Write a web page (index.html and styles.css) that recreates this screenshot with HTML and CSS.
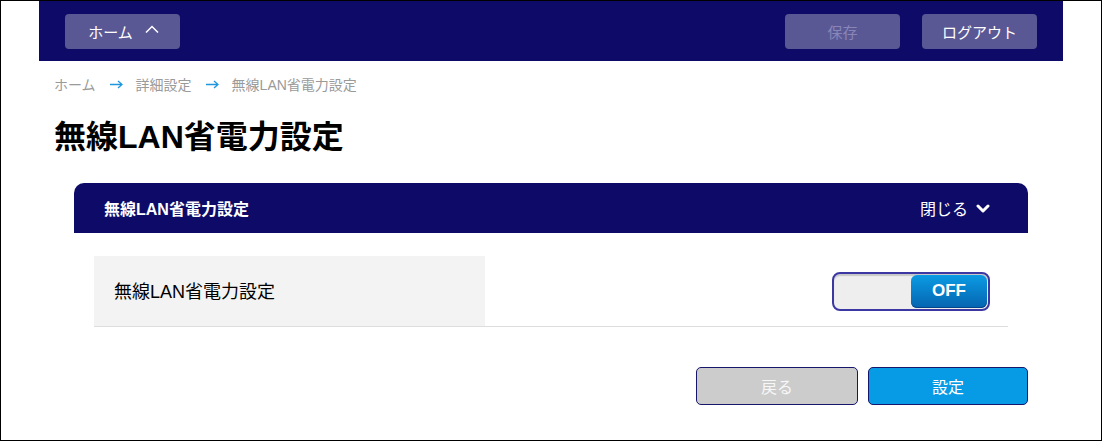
FILE: index.html
```html
<!DOCTYPE html>
<html lang="ja">
<head>
<meta charset="utf-8">
<title>無線LAN省電力設定</title>
<link rel="stylesheet" href="styles.css">
</head>
<body>
<div class="page">
  <header class="topbar">
    <button class="hbtn home">ホーム
      <svg class="up" width="14" height="8" viewBox="0 0 14 8"><path d="M1 7.5 L7 1.5 L13 7.5" fill="none" stroke="#fff" stroke-width="1.5"/></svg>
    </button>
    <div class="actions">
      <button class="hbtn save">保存</button>
      <button class="hbtn logout">ログアウト</button>
    </div>
  </header>
  <nav class="crumbs">
    <span>ホーム</span>
    <svg class="arr" width="13" height="9" viewBox="0 0 13 9"><path d="M0 4.5 H12 M8 1 L12 4.5 L8 8" fill="none" stroke="#1e98dc" stroke-width="1.3"/></svg>
    <span>詳細設定</span>
    <svg class="arr" width="13" height="9" viewBox="0 0 13 9"><path d="M0 4.5 H12 M8 1 L12 4.5 L8 8" fill="none" stroke="#1e98dc" stroke-width="1.3"/></svg>
    <span>無線LAN省電力設定</span>
  </nav>
  <h1 class="title">無線LAN省電力設定</h1>
  <section class="panel">
    <div class="panel-head">
      <span class="panel-title">無線LAN省電力設定</span>
      <span class="close">閉じる
        <svg class="down" width="14" height="9" viewBox="0 0 14 9"><path d="M2 2 L7 7 L12 2" fill="none" stroke="#fff" stroke-width="3" stroke-linecap="round" stroke-linejoin="round"/></svg>
      </span>
    </div>
    <div class="panel-body">
      <div class="row">
        <div class="label">無線LAN省電力設定</div>
        <div class="value">
          <div class="toggle"><span class="off">OFF</span></div>
        </div>
      </div>
    </div>
  </section>
  <div class="footer-btns">
    <button class="fbtn back">戻る</button>
    <button class="fbtn apply">設定</button>
  </div>
</div>
</body>
</html>
```
FILE: styles.css
```css
* { box-sizing: border-box; }
html, body { margin: 0; padding: 0; background: #fff; }
body {
  font-family: "Liberation Sans", "Noto Sans CJK JP", sans-serif;
  color: #000;
}
.page {
  width: 1102px;
  height: 441px;
  border: 1px solid #000;
  overflow: hidden;
}
.topbar {
  margin: 0 38px;
  height: 60px;
  background: #0e0b68;
  display: flex;
  align-items: center;
  justify-content: space-between;
  padding: 0 26px;
}
.actions { display: flex; gap: 22px; }
.hbtn {
  height: 35px;
  width: 115px;
  border: none;
  border-radius: 4px;
  background: #5a5894;
  color: #fff;
  font-family: inherit;
  font-size: 15px;
  display: flex;
  align-items: center;
  justify-content: center;
  padding: 0;
}
.hbtn.home { gap: 12px; padding-left: 2px; }
.hbtn.save { color: #8886b8; }
.up { margin-top: -4px; }
.crumbs {
  margin: 0 0 0 53px;
  height: 44px;
  display: flex;
  align-items: center;
  font-size: 14px;
  color: #9a9a9a;
  padding-top: 1px;
}
.crumbs .arr { margin: 1px 13px 0 14px; }
.title {
  margin: 12px 0 0 53px;
  font-size: 32px;
  font-weight: bold;
  line-height: 40px;
}
.panel { margin: 26px 73px 0; }
.panel-head {
  height: 50px;
  background: #0e0b68;
  border-radius: 10px 10px 0 0;
  display: flex;
  align-items: center;
  justify-content: space-between;
  padding: 0 38px 0 30px;
  color: #fff;
}
.panel-title { font-size: 16px; font-weight: bold; }
.close { font-size: 16px; display: flex; align-items: center; gap: 8px; }
.down { margin-top: 1px; }
.panel-body { padding: 23px 20px 0; }
.row {
  display: flex;
  height: 71px;
  border-bottom: 1px solid #dddddd;
}
.label {
  width: 391px;
  background: #f3f3f3;
  font-size: 18px;
  display: flex;
  align-items: center;
  padding-left: 20px;
  padding-bottom: 3px;
}
.value {
  flex: 1;
  display: flex;
  align-items: center;
  justify-content: flex-end;
  padding-right: 18px;
}
.toggle {
  width: 158px;
  height: 39px;
  border: 2px solid #3b37a3;
  border-radius: 8px;
  background: #eeeeee;
  box-shadow: inset 0 2px 1px #c8c8c8;
  display: flex;
  justify-content: flex-end;
  padding: 1px;
}
.off {
  width: 76px;
  border-radius: 6px;
  background: linear-gradient(#0a9be3, #0664b0);
  box-shadow: inset 0 -1px 0 #06448a;
  color: #fff;
  font-weight: bold;
  font-size: 17px;
  display: flex;
  align-items: center;
  justify-content: center;
}
.footer-btns {
  margin: 40px 73px 0 0;
  display: flex;
  justify-content: flex-end;
  gap: 10px;
}
.fbtn {
  height: 38px;
  width: 162px;
  border: 1px solid #16166b;
  border-radius: 5px;
  font-family: inherit;
  font-size: 16px;
  color: #fff;
  padding: 0;
}
.fbtn.back { background: #cccccc; color: #f7f7f7; }
.fbtn.apply { width: 160px; background: #079be6; }
```
